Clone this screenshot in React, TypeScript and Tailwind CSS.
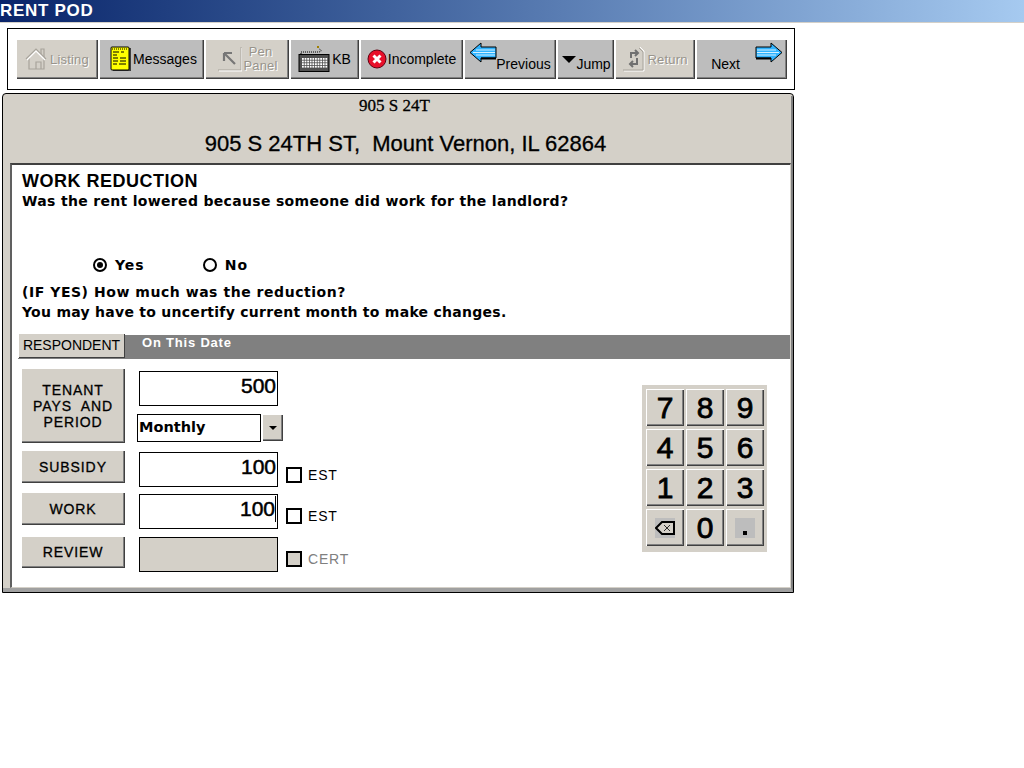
import type { ReactNode } from "react";

const bevel =
  "shadow-[inset_1px_1px_0_#ffffff,inset_-1px_-1px_0_#404040,inset_-2px_-2px_0_#808080]";

const bodyText = "font-['DejaVu_Sans'] font-bold text-[14px] leading-5 text-black";

function ToolButton({
  width,
  disabled,
  children,
}: {
  width: string;
  disabled?: boolean;
  children: ReactNode;
}) {
  return (
    <div
      className={`${width} h-10 flex items-center justify-center shrink-0 ${bevel} ${
        disabled ? "bg-[#d4d0c8]" : "bg-[#bdbdbd]"
      }`}
    >
      {children}
    </div>
  );
}

function HouseIcon() {
  return (
    <svg width="24" height="24" viewBox="0 0 24 24" fill="none" stroke="#a8a49c" strokeWidth="1.2">
      <path d="M1 12 L11 2 L21 12" />
      <path d="M16 7 V2 H19 V10" />
      <path d="M4 11 V22 H19 V11" />
      <path d="M11 22 V15 H16 V22" />
      <path d="M2 13 L11 4 L20 13" stroke="#ffffff" />
    </svg>
  );
}

function NotepadIcon() {
  return (
    <svg width="22" height="26" viewBox="0 0 22 26">
      <rect x="3" y="2" width="18" height="23" fill="#404040" />
      <rect x="1" y="1" width="18" height="23" rx="1" fill="#ffff00" stroke="#000000" />
      <path d="M2 3 H18" stroke="#000000" strokeDasharray="1 1" />
      <path
        d="M3 6 H9 M11 6 H14 M3 9 H7 M3 12 H8 M10 12 H16 M3 15 H8 M10 15 H16 M3 18 H7 M9 18 H16"
        stroke="#000000"
      />
    </svg>
  );
}

function PenIcon() {
  return (
    <svg width="26" height="30" viewBox="0 0 26 30" fill="none">
      <path d="M8 9 H16 M8 9 V17 M8 9 L19 20" strokeWidth="2.2" stroke="#777777" />
      <path d="M25 3 V26 H2" stroke="#a8a49c" />
      <path d="M26 4 V27 H3" stroke="#ffffff" />
    </svg>
  );
}

function KeyboardIcon() {
  const keys = [];
  for (let r = 0; r < 4; r++) {
    for (let c = 0; c < 10; c++) {
      keys.push(<rect key={`${r}-${c}`} x={4 + c * 2.6} y={13 + r * 2.6} width="1.8" height="1.8" fill="#ffffff" />);
    }
  }
  return (
    <svg width="32" height="28" viewBox="0 0 32 28" fill="none">
      <path d="M3 9 V7 H20 C24 7 24 5 21 4" stroke="#000000" strokeDasharray="1 1" />
      <rect x="19" y="1" width="2" height="2" fill="#a08000" />
      <rect x="1" y="9.5" width="30" height="17" fill="#505050" stroke="#000000" />
      {keys}
    </svg>
  );
}

function StopIcon() {
  return (
    <svg width="20" height="20" viewBox="0 0 20 20">
      <circle cx="10" cy="10" r="9" fill="#e8102a" stroke="#600010" />
      <path d="M6.5 6.5 L13.5 13.5 M13.5 6.5 L6.5 13.5" stroke="#ffffff" strokeWidth="3" />
    </svg>
  );
}

function BlueArrow({ left }: { left?: boolean }) {
  return (
    <svg width="28" height="21" viewBox="0 0 28 21" className={left ? "" : "-scale-x-100"}>
      <path d="M1 10.5 L12 1 V5 H27 V16 H12 V20 Z" fill="#30b4ff" stroke="#000000" />
      <path d="M12 16.5 H27" stroke="#000000" strokeWidth="2" />
      <path d="M7 8 H26 M4 10.5 H26 M7 13 H26" stroke="#ffffff" strokeOpacity="0.8" />
    </svg>
  );
}

function ReturnIcon() {
  return (
    <svg width="24" height="26" viewBox="0 0 24 26" fill="none">
      <path d="M2 25 H22 V5 L18 1" stroke="#ffffff" />
      <path d="M1 24 H21 V6 L17 2" stroke="#a8a49c" />
      <path d="M9 12 V7 H16 M13 4 L16 7 L13 10" stroke="#707070" strokeWidth="2" />
      <path d="M15 12 V18 H8 M11 15 L8 18 L11 21" stroke="#707070" strokeWidth="2" />
    </svg>
  );
}

function Toolbar() {
  const label = "text-[14px] leading-none text-black";
  const off = "text-[13px] leading-none text-[#98948c] tracking-[0.2px] [text-shadow:1px_1px_0_#ffffff]";
  return (
    <div className="ml-[7px] mt-[5px] w-[788px] h-[62px] border border-black pl-2 pt-[10px] flex gap-px">
      <ToolButton width="w-[82px]" disabled>
        <HouseIcon />
        <span className={`${off} ml-px`}>Listing</span>
      </ToolButton>
      <ToolButton width="w-[105px]">
        <div className="flex items-center pl-1">
          <NotepadIcon />
          <span className={`${label} ml-px`}>Messages</span>
        </div>
      </ToolButton>
      <ToolButton width="w-[84px]" disabled>
        <PenIcon />
        <span className={`${off} ml-px -mt-px text-center !leading-[14px]`}>
          Pen
          <br />
          Panel
        </span>
      </ToolButton>
      <ToolButton width="w-[69px]">
        <KeyboardIcon />
        <span className={`${label} ml-[2px]`}>KB</span>
      </ToolButton>
      <ToolButton width="w-[103px]">
        <StopIcon />
        <span className={`${label} ml-px`}>Incomplete</span>
      </ToolButton>
      <ToolButton width="w-[92px]">
        <div className="flex items-start pt-[3px] h-full">
          <BlueArrow left />
          <span className={`${label} mt-[15px] -ml-px`}>Previous</span>
        </div>
      </ToolButton>
      <ToolButton width="w-[57px]">
        <div className="flex items-start pt-[17px] h-full pl-[2px]">
          <div className="w-0 h-0 border-x-[7px] border-x-transparent border-t-[7px] border-t-black" />
          <span className={`${label} mt-px`}>Jump</span>
        </div>
      </ToolButton>
      <ToolButton width="w-[80px]" disabled>
        <ReturnIcon />
        <span className={`${off} ml-px`}>Return</span>
      </ToolButton>
      <ToolButton width="w-[91px]">
        <div className="flex items-start justify-end w-full pt-[3px] pr-1 h-full">
          <span className={`${label} mt-[15px] mr-[15px]`}>Next</span>
          <BlueArrow />
        </div>
      </ToolButton>
    </div>
  );
}

function SideButton({ height, children }: { height: string; children: ReactNode }) {
  return (
    <div
      className={`w-[104px] ${height} shrink-0 flex items-center justify-center text-center bg-[#d4d0c8] text-[14px] leading-4 tracking-[0.9px] [-webkit-text-stroke:0.3px_#000000] text-black ${bevel}`}
    >
      {children}
    </div>
  );
}

function Amount({ value, caret }: { value: string; caret?: boolean }) {
  return (
    <div className="w-[139px] h-[35px] border border-black bg-white flex items-start justify-end pr-px text-[21px] leading-[28px] [-webkit-text-stroke:0.5px_#000000] text-black">
      {value}
      {caret && <span className="w-px h-[26px] mt-px bg-black" />}
    </div>
  );
}

function CheckLabel({ text, disabled, top }: { text: string; disabled?: boolean; top: string }) {
  return (
    <div className={`flex items-center ml-2 h-4 ${top}`}>
      <div className={`w-4 h-4 border-2 border-black ${disabled ? "bg-[#d4d0c8]" : "bg-white"}`} />
      <span className={`ml-[6px] text-[14px] tracking-[0.8px] ${disabled ? "text-[#808080]" : "text-black"}`}>
        {text}
      </span>
    </div>
  );
}

function Radio({ checked, label }: { checked?: boolean; label: string }) {
  return (
    <div className="flex items-center">
      <div className="w-[14px] h-[14px] rounded-full border-2 border-black flex items-center justify-center bg-white">
        {checked && <div className="w-[6px] h-[6px] rounded-full bg-black" />}
      </div>
      <span className={`ml-2 tracking-[1px] ${bodyText}`}>{label}</span>
    </div>
  );
}

function BackspaceIcon() {
  return (
    <div className="w-5 h-5 bg-[#bdbdbd] flex items-center justify-center">
      <svg width="20" height="14" viewBox="0 0 20 14" fill="none" stroke="#000000">
        <path d="M1 7 L7 1 H19 V13 H7 Z" strokeWidth="2" fill="#d4d0c8" />
        <path d="M9 4 L15 10 M15 4 L9 10" strokeWidth="0.8" />
      </svg>
    </div>
  );
}

function Keypad() {
  const keys = ["7", "8", "9", "4", "5", "6", "1", "2", "3"];
  const key = `flex items-center justify-center bg-[#d4d0c8] ${bevel} text-[30px] text-black [-webkit-text-stroke:0.8px_#000000]`;
  return (
    <div className="w-[125px] h-[167px] mt-[26px] bg-[#d4d0c8] p-1 grid grid-cols-[38px_38px_38px] grid-rows-[37px_37px_37px_37px] gap-x-[2px] gap-y-[3px]">
      {keys.map((k) => (
        <div key={k} className={key}>
          {k}
        </div>
      ))}
      <div className={key}>
        <BackspaceIcon />
      </div>
      <div className={key}>0</div>
      <div className={key}>
        <div className="w-5 h-5 bg-[#bdbdbd] flex items-end justify-center pb-[3px]">
          <div className="w-1 h-1 bg-black" />
        </div>
      </div>
    </div>
  );
}

export default function App() {
  return (
    <div className="w-[1024px] h-[768px] bg-white overflow-hidden font-['Liberation_Sans',sans-serif]">
      <div className="h-[23px] border-b border-[#d4d0c8] bg-gradient-to-r from-[#0a246a] to-[#a6caf0] text-white font-bold text-[17px] leading-[22px] tracking-[0.7px]">
        RENT POD
      </div>
      <Toolbar />

      <div className="ml-[2px] mt-[3px] w-[792px] h-[500px] border border-black rounded-t-[4px] bg-[#d4d0c8] pt-[2px] flex flex-col">
        <div className="flex-1 flex flex-col min-h-0 border-r-2 border-b-4 border-r-[#808080] border-b-[#a0a0a0]">
          <div className="h-[67px] text-center text-black shrink-0">
            <div className="pr-[5px] font-['Liberation_Serif',serif] text-[17px] leading-5 [-webkit-text-stroke:0.3px_#000000]">
              905 S 24T
            </div>
            <div className="pl-[17px] mt-4 text-[22px] leading-6 [-webkit-text-stroke:0.3px_#000000] whitespace-pre">
              905 S 24TH ST,  Mount Vernon, IL 62864
            </div>
          </div>

          <div className="ml-[7px] flex-1 border-t-2 border-l-2 border-t-[#404040] border-l-[#606060] border-r border-b border-r-[#d4d0c8] border-b-[#d4d0c8] bg-white pt-[6px] flex flex-col">
            <div className="pl-[10px]">
              <div className="font-bold text-[18px] leading-5 tracking-[0.5px] text-black">WORK REDUCTION</div>
              <div className={`tracking-[0.32px] ${bodyText}`}>
                Was the rent lowered because someone did work for the landlord?
              </div>
              <div className="flex gap-[58px] pl-[71px] mt-[44px]">
                <Radio checked label="Yes" />
                <Radio label="No" />
              </div>
              <div className={`mt-[7px] tracking-[0.54px] ${bodyText}`}>(IF YES) How much was the reduction?</div>
              <div className={`tracking-[0.27px] ${bodyText}`}>
                You may have to uncertify current month to make changes.
              </div>
            </div>

            <div className="mt-[13px] ml-[6px] h-6 bg-[#808080] flex items-start">
              <div className="w-[107px] h-[25px] -mt-[2px] flex items-center justify-center bg-[#d4d0c8] text-[14px] text-black shadow-[inset_1px_1px_0_#ffffff,inset_-1px_-1px_0_#404040]">
                RESPONDENT
              </div>
              <span className="ml-[17px] font-bold text-[13px] leading-4 tracking-[0.8px] text-white">
                On This Date
              </span>
            </div>

            <div className="flex justify-between pl-[9px] pr-[23px]">
              <div className="pt-[9px] flex flex-col">
                <div className="flex h-[75px]">
                  <SideButton height="h-[75px]">
                    <span className="whitespace-pre">
                      TENANT
                      <br />
                      {"PAYS  AND"}
                      <br />
                      PERIOD
                    </span>
                  </SideButton>
                  <div className="ml-[14px] pt-[3px]">
                    <Amount value="500" />
                    <div className="flex -ml-[2px] mt-2">
                      <div className="w-[124px] h-[28px] border border-black bg-white pl-px font-['DejaVu_Sans'] font-bold text-[14.5px] leading-[25px] text-black">
                        Monthly
                      </div>
                      <div className={`w-[21px] h-[27px] ml-px flex items-center justify-center bg-[#d4d0c8] ${bevel}`}>
                        <div className="w-0 h-0 border-x-[4px] border-x-transparent border-t-[4px] border-t-black" />
                      </div>
                    </div>
                  </div>
                </div>
                <div className="flex mt-[7px]">
                  <SideButton height="h-[33px]">SUBSIDY</SideButton>
                  <div className="ml-[14px] mt-[2px]">
                    <Amount value="100" />
                  </div>
                  <CheckLabel text="EST" top="mt-[17px]" />
                </div>
                <div className="flex mt-[5px]">
                  <SideButton height="h-[33px]">WORK</SideButton>
                  <div className="ml-[14px] mt-[2px]">
                    <Amount value="100" caret />
                  </div>
                  <CheckLabel text="EST" top="mt-[16px]" />
                </div>
                <div className="flex mt-[7px]">
                  <SideButton height="h-[32px]">REVIEW</SideButton>
                  <div className="ml-[14px] mt-px">
                    <div className="w-[139px] h-[35px] border border-black bg-[#d4d0c8]" />
                  </div>
                  <CheckLabel text="CERT" disabled top="mt-[15px]" />
                </div>
              </div>
              <Keypad />
            </div>
          </div>
        </div>
      </div>
    </div>
  );
}
